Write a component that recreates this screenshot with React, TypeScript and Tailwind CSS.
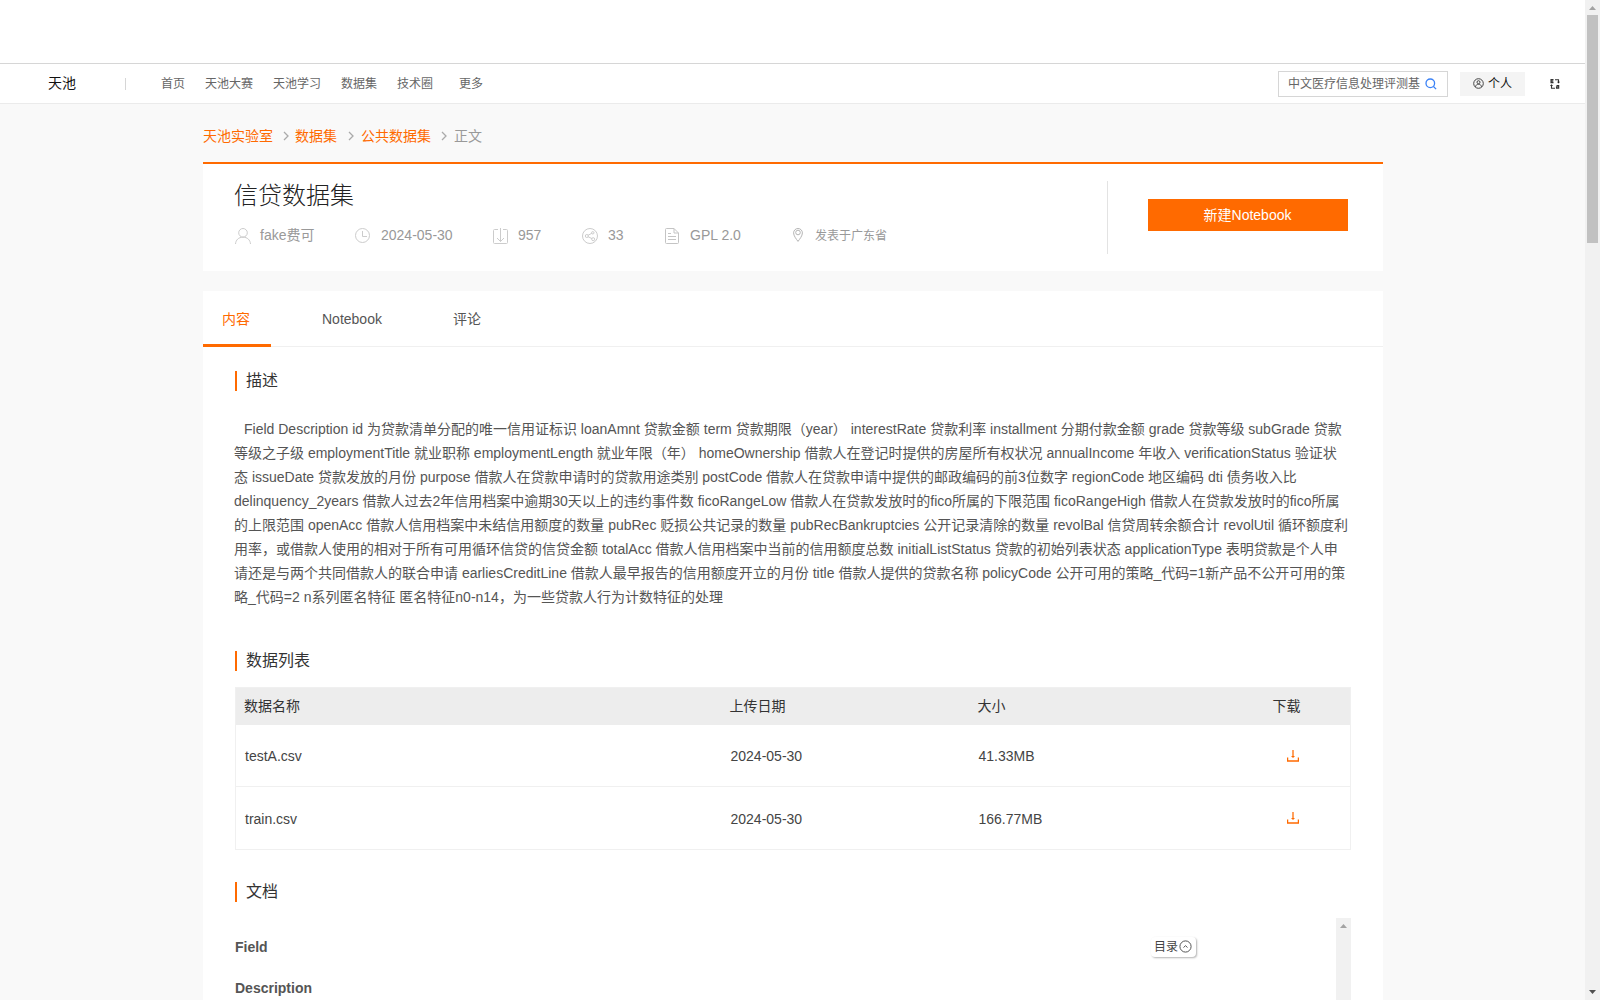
import type { ReactNode } from "react";

const NAV_ITEMS = [
  { label: "首页", className: "ml-[35px]" },
  { label: "天池大赛", className: "ml-5" },
  { label: "天池学习", className: "ml-5" },
  { label: "数据集", className: "ml-5" },
  { label: "技术圈", className: "ml-5" },
  { label: "更多", className: "ml-[26px]" },
];

const DESCRIPTION_LINES = [
  "Field Description id 为贷款清单分配的唯一信用证标识 loanAmnt 贷款金额 term 贷款期限（year） interestRate 贷款利率 installment 分期付款金额 grade 贷款等级 subGrade 贷款",
  "等级之子级 employmentTitle 就业职称 employmentLength 就业年限（年） homeOwnership 借款人在登记时提供的房屋所有权状况 annualIncome 年收入 verificationStatus 验证状",
  "态 issueDate 贷款发放的月份 purpose 借款人在贷款申请时的贷款用途类别 postCode 借款人在贷款申请中提供的邮政编码的前3位数字 regionCode 地区编码 dti 债务收入比",
  "delinquency_2years 借款人过去2年信用档案中逾期30天以上的违约事件数 ficoRangeLow 借款人在贷款发放时的fico所属的下限范围 ficoRangeHigh 借款人在贷款发放时的fico所属",
  "的上限范围 openAcc 借款人信用档案中未结信用额度的数量 pubRec 贬损公共记录的数量 pubRecBankruptcies 公开记录清除的数量 revolBal 信贷周转余额合计 revolUtil 循环额度利",
  "用率，或借款人使用的相对于所有可用循环信贷的信贷金额 totalAcc 借款人信用档案中当前的信用额度总数 initialListStatus 贷款的初始列表状态 applicationType 表明贷款是个人申",
  "请还是与两个共同借款人的联合申请 earliesCreditLine 借款人最早报告的信用额度开立的月份 title 借款人提供的贷款名称 policyCode 公开可用的策略_代码=1新产品不公开可用的策",
  "略_代码=2 n系列匿名特征 匿名特征n0-n14，为一些贷款人行为计数特征的处理",
];

const FILES = [
  { name: "testA.csv", date: "2024-05-30", size: "41.33MB", rowClass: "h-[62px]", iconClass: "pl-[67px] pt-[2px]" },
  { name: "train.csv", date: "2024-05-30", size: "166.77MB", rowClass: "h-[63px]", iconClass: "pl-[67px]" },
];

const Chevron = ({ className }: { className: string }) => (
  <svg className={className} width="6" height="10" viewBox="0 0 6 10" fill="none" stroke="#aaa" strokeWidth="1.3">
    <path d="M1 1l4 4-4 4" />
  </svg>
);

const UserIcon = () => (
  <svg width="16" height="16" viewBox="0 0 16 16" fill="none" stroke="#ccc">
    <circle cx="8" cy="4.8" r="4.3" />
    <path d="M.5 16c.3-4 3-6.8 7.5-6.8s7.2 2.8 7.5 6.8" />
  </svg>
);

const ClockIcon = () => (
  <svg width="16" height="16" viewBox="0 0 16 16" fill="none" stroke="#ccc">
    <circle cx="7.5" cy="7.5" r="7" />
    <path d="M7.5 3v5.500h4.5" />
  </svg>
);

const DownloadBoxIcon = () => (
  <svg width="16" height="16" viewBox="0 0 16 16" fill="none" stroke="#ccc">
    <path d="M5 1.500H1.500a1 1 0 0 0-1 1v12a1 1 0 0 0 1 1h12a1 1 0 0 0 1-1v-12a1 1 0 0 0-1-1H10" />
    <path d="M7.500 0v13.500M4 10L7.500 13.500 11 10" />
  </svg>
);

const ShareIcon = () => (
  <svg width="16" height="16" viewBox="0 0 16 16" fill="none" stroke="#ccc">
    <circle cx="8" cy="8" r="7.5" />
    <circle cx="4.8" cy="8" r="1.5" />
    <circle cx="10.8" cy="4.8" r="1.2" />
    <circle cx="11.2" cy="11.2" r="1.5" />
    <path d="M6 7.300l3.800-2M6 8.700l4 1.900" />
  </svg>
);

const FileIcon = () => (
  <svg width="14" height="16" viewBox="0 0 14 16" fill="none" stroke="#c4c4c4">
    <path d="M9 .5H1.500a1 1 0 0 0-1 1v13a1 1 0 0 0 1 1h11a1 1 0 0 0 1-1V5L9 .5v4.500h4.500" />
    <path d="M3 5.500h3M3 8.500h8M3 11.500h8" />
  </svg>
);

const PinIcon = () => (
  <svg width="10" height="14" viewBox="0 0 10 14" fill="none" stroke="#b5b5b5">
    <path d="M5 13.400C3.200 11 .6 7.800.6 4.900a4.400 4.400 0 0 1 8.800 0C9.400 7.800 6.800 11 5 13.400z" />
    <circle cx="5" cy="4.500" r="2.300" />
  </svg>
);

const DownloadIcon = () => (
  <svg width="12" height="12" viewBox="0 0 12 12" fill="none" stroke="#ff6a00">
    <path d="M.6 7.500v3.500h10.800V7.500" strokeWidth="1.300" />
    <path d="M6 0v7" strokeWidth="1.800" strokeOpacity=".7" />
    <path d="M4 6h4L6 8z" fill="#ff6a00" stroke="none" />
  </svg>
);

const SectionTitle = ({ children }: { children: ReactNode }) => (
  <div className="flex h-5 items-center border-l-2 border-[#ff6a00] pl-[9px] text-base leading-5 text-[#333]">
    {children}
  </div>
);

const TopNav = () => (
  <header className="flex h-[41px] items-center border-t border-b border-t-[#d6d6d6] border-b-[#ebebeb] bg-white pl-12 pr-[25px] text-xs text-[#666]">
    <span className="w-7 pb-px text-sm text-[#111]">天池</span>
    <span className="ml-[49px] h-3 w-px bg-[#d6d6d6]" />
    {NAV_ITEMS.map((item) => (
      <span key={item.label} className={item.className}>
        {item.label}
      </span>
    ))}
    <div className="ml-auto flex h-[26px] w-[170px] items-center border border-[#d6d6d6] pl-[9px]">
      <span className="w-[133px]">中文医疗信息处理评测基</span>
      <svg className="ml-1" width="12" height="12" viewBox="0 0 12 12" fill="none" stroke="#3b82f6" strokeWidth="1.3">
        <circle cx="5.3" cy="5.3" r="4.3" />
        <path d="M8.500 8.500l2.600 2.600" />
      </svg>
    </div>
    <div className="ml-3 flex h-6 w-[65px] items-center bg-[#f4f4f4] pl-[13px] text-[#111]">
      <svg className="mr-1" width="11" height="11" viewBox="0 0 11 11" fill="none" stroke="#444">
        <circle cx="5.5" cy="5.5" r="4.8" />
        <circle cx="5.5" cy="4.2" r="1.5" />
        <path d="M2.500 8.800c.4-2 1.500-2.500 3-2.500s2.600.5 3 2.500" />
      </svg>
      个人
    </div>
    {/* language switch */}
    <svg className="ml-[25px]" width="10" height="10" viewBox="0 0 10 10" fill="none" stroke="#333" strokeWidth="1.1">
      <path d="M3.500.6H1v3h2.500M1 2.100h2.300M5 .8h3.500v3" />
      <path d="M7 2.800h3L8.500 4.500zM0 7l1.500-1.700L3 7z" fill="#222" stroke="none" />
      <path d="M1.500 6.500v2.700H5" />
      <path d="M6.500 6.500h2.200v2.700H6.500V7.900h2.200" />
    </svg>
  </header>
);

const Breadcrumb = () => (
  <nav className="flex h-[58px] items-center pt-[5px] text-sm text-[#ff6a00]">
    <span className="w-[70px]">天池实验室</span>
    <Chevron className="mt-px ml-[10px] mr-[6px]" />
    <span className="w-[42px]">数据集</span>
    <Chevron className="mt-px ml-[11px] mr-[7px]" />
    <span className="w-[70px]">公共数据集</span>
    <Chevron className="mt-px ml-[10px] mr-[7px]" />
    <span className="text-[#999]">正文</span>
  </nav>
);

const DatasetHeader = () => (
  <section className="flex h-[109px] border-t-2 border-[#ff6a00] bg-white">
    <div className="mt-[17px] h-[73px] w-[905px] border-r border-[#e3e3e3] pl-8">
      <h1 className="-mt-[2px] -ml-px text-2xl leading-[34px] font-light text-[#222]">信贷数据集</h1>
      <div className="mt-3 flex h-5 items-center text-sm text-[#999]">
        <div className="mt-0.5">
          <UserIcon />
        </div>
        <span className="ml-[9px] w-[95px]">fake费可</span>
        <div className="mt-0.5">
          <ClockIcon />
        </div>
        <span className="ml-[10px] w-28">2024-05-30</span>
        <div className="mt-0.5">
          <DownloadBoxIcon />
        </div>
        <span className="ml-[9px] w-16">957</span>
        <div className="mt-0.5">
          <ShareIcon />
        </div>
        <span className="ml-[10px] w-[57px]">33</span>
        <div className="mt-0.5">
          <FileIcon />
        </div>
        <span className="ml-[11px] w-[103px]">GPL 2.0</span>
        <PinIcon />
        <span className="ml-3 pt-0.5 text-xs">发表于广东省</span>
      </div>
    </div>
    <button className="mt-[35px] ml-10 h-8 w-[200px] bg-[#ff6a00] pr-px text-sm text-white">新建Notebook</button>
  </section>
);

const Tabs = () => (
  <div className="flex h-14 border-b border-[#f0f0f0] text-sm text-[#555]">
    <div className="-mb-px flex w-[68px] items-center border-b-[3px] border-[#ff6a00] pl-[19px] pt-[3px] text-[#ff6a00]">内容</div>
    <div className="ml-[51px] flex items-center">Notebook</div>
    <div className="ml-[71px] flex items-center">评论</div>
  </div>
);

const FileTable = () => (
  <table className="mt-4 w-[1116px] table-fixed border-collapse border border-[#f0f0f0] text-left text-sm text-[#444]">
    <thead>
      <tr className="h-[37px] bg-[#ededed] text-[#333]">
        <th className="w-[486px] pl-2 pb-px font-normal">数据名称</th>
        <th className="w-[248px] pl-2 pb-px font-normal">上传日期</th>
        <th className="w-[250px] pl-2 pb-px font-normal">大小</th>
        <th className="pl-[53px] pb-px font-normal">下载</th>
      </tr>
    </thead>
    <tbody>
      {FILES.map((file) => (
        <tr key={file.name} className={`border-b border-[#f0f0f0] ${file.rowClass}`}>
          <td className="pl-[9px] pt-px">{file.name}</td>
          <td className="pl-[9px] pt-px">{file.date}</td>
          <td className="pl-[9px] pt-px">{file.size}</td>
          <td className={file.iconClass}>
            <DownloadIcon />
          </td>
        </tr>
      ))}
    </tbody>
  </table>
);

const DocPreview = () => (
  <div className="mt-4 flex h-[82px] w-[1116px] overflow-hidden">
    <div className="w-[916px] pt-[17px] text-sm font-bold text-[#555]">
      <p className="leading-6">Field</p>
      <p className="mt-[17px] leading-6">Description</p>
    </div>
    <div className="mt-[19px] flex h-5 w-[45px] items-center rounded-sm bg-white pl-[3px] text-xs text-[#444] shadow-[1px_1px_2px_rgba(0,0,0,0.3)]">
      目录
      <svg className="ml-px -mt-px" width="13" height="13" viewBox="0 0 13 13" fill="none" stroke="#555">
        <circle cx="6.5" cy="6.5" r="5.6" />
        <path d="M4.500 7.500l2-1.800 2 1.800" />
      </svg>
    </div>
    <div className="ml-auto flex w-[15px] justify-center bg-[#f1f1f1] pt-[6px]">
      <svg width="7" height="4" viewBox="0 0 7 4" fill="#a3a3a3">
        <path d="M0 4L3.500 0 7 4z" />
      </svg>
    </div>
  </div>
);

const PageScrollbar = () => (
  <div className="flex h-full w-[15px] shrink-0 flex-col items-center bg-[#f1f1f1]">
    <svg className="mt-[6px]" width="7" height="4" viewBox="0 0 7 4" fill="#a3a3a3">
      <path d="M0 4L3.500 0 7 4z" />
    </svg>
    <div className="mt-[5px] h-[228px] w-[11px] bg-[#c1c1c1]" />
    <svg className="mt-auto mb-[6px]" width="7" height="4" viewBox="0 0 7 4" fill="#505050">
      <path d="M0 0h7L3.500 4z" />
    </svg>
  </div>
);

const App = () => {
  return (
    <div className="flex h-[1000px] w-[1600px] overflow-hidden bg-[#f9f9f9] font-['Liberation_Sans','Noto_Sans_CJK_SC',sans-serif]">
      <div className="w-[1585px]">
        <div className="h-[63px] bg-white" />
        <TopNav />
        <main className="ml-[203px] w-[1180px]">
          <Breadcrumb />
          <DatasetHeader />
          <section className="mt-5 h-[709px] bg-white">
            <Tabs />
            <div className="pt-6 pl-8">
              <SectionTitle>描述</SectionTitle>
              <div className="mt-[26px] text-sm leading-6 whitespace-nowrap text-[#555]">
                {DESCRIPTION_LINES.map((line, i) => (
                  <p key={i} className={i === 0 ? "pl-[9px]" : "-ml-px"}>
                    {line}
                  </p>
                ))}
              </div>
              <div className="mt-[42px]">
                <SectionTitle>数据列表</SectionTitle>
              </div>
              <FileTable />
              <div className="mt-8">
                <SectionTitle>文档</SectionTitle>
              </div>
              <DocPreview />
            </div>
          </section>
        </main>
      </div>
      <PageScrollbar />
    </div>
  );
};

export default App;
